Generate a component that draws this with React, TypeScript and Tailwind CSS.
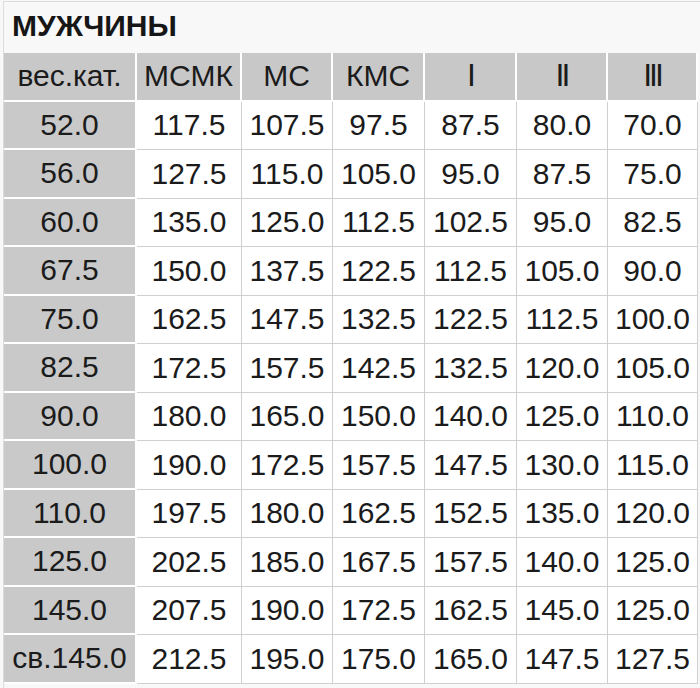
import React from "react";

const headers = ["вес.кат.", "МСМК", "МС", "КМС", "I", "II", "III"];

const rows: string[][] = [
  ["52.0", "117.5", "107.5", "97.5", "87.5", "80.0", "70.0"],
  ["56.0", "127.5", "115.0", "105.0", "95.0", "87.5", "75.0"],
  ["60.0", "135.0", "125.0", "112.5", "102.5", "95.0", "82.5"],
  ["67.5", "150.0", "137.5", "122.5", "112.5", "105.0", "90.0"],
  ["75.0", "162.5", "147.5", "132.5", "122.5", "112.5", "100.0"],
  ["82.5", "172.5", "157.5", "142.5", "132.5", "120.0", "105.0"],
  ["90.0", "180.0", "165.0", "150.0", "140.0", "125.0", "110.0"],
  ["100.0", "190.0", "172.5", "157.5", "147.5", "130.0", "115.0"],
  ["110.0", "197.5", "180.0", "162.5", "152.5", "135.0", "120.0"],
  ["125.0", "202.5", "185.0", "167.5", "157.5", "140.0", "125.0"],
  ["145.0", "207.5", "190.0", "172.5", "162.5", "145.0", "125.0"],
  ["св.145.0", "212.5", "195.0", "175.0", "165.0", "147.5", "127.5"],
];

const widths = ["w-[133px]", "w-[105px]", "w-[91px]", "w-[92px]", "w-[92px]", "w-[91px]", "w-[90px]"];

const App: React.FC = () => {
  return (
    <div
      className="w-[700px] h-[688px] bg-[#f8f8f8] overflow-hidden"
      style={{ fontFamily: '"Liberation Sans", Arial, sans-serif' }}
    >
      <div className="ml-[3px] mt-[1px] border-l border-t border-[#dcdcdc] h-[687px]">
        <div className="h-[51px] pl-2 pt-[9px]">
          <h1 className="text-[30px] leading-[30px] font-bold text-[#161616]">МУЖЧИНЫ</h1>
        </div>
        <table className="border-separate border-spacing-0 table-fixed text-[30px] leading-[34px] text-[#1b1b1b]">
          <thead>
            <tr>
              {headers.map((h, i) => (
                <th
                  key={h}
                  className={`${widths[i]} h-[48.5px] p-0 font-normal text-center bg-[#c8c8c8] border-r-2 border-b-2 border-white`}
                >
                  {i >= 4 ? <span className="tracking-[-3px] text-[32px] leading-[30px]">{h}</span> : h}
                </th>
              ))}
            </tr>
          </thead>
          <tbody>
            {rows.map((r) => (
              <tr key={r[0]}>
                {r.map((v, i) =>
                  i === 0 ? (
                    <td
                      key={i}
                      className="h-[48.5px] p-0 text-center bg-[#c9c9c9] border-r-2 border-b-2 border-white whitespace-nowrap"
                    >
                      {v}
                    </td>
                  ) : (
                    <td
                      key={i}
                      className="h-[48.5px] p-0 text-center bg-white border-r border-b border-[#cfcfcf]"
                    >
                      {v}
                    </td>
                  ),
                )}
              </tr>
            ))}
          </tbody>
        </table>
      </div>
    </div>
  );
};

export default App;
